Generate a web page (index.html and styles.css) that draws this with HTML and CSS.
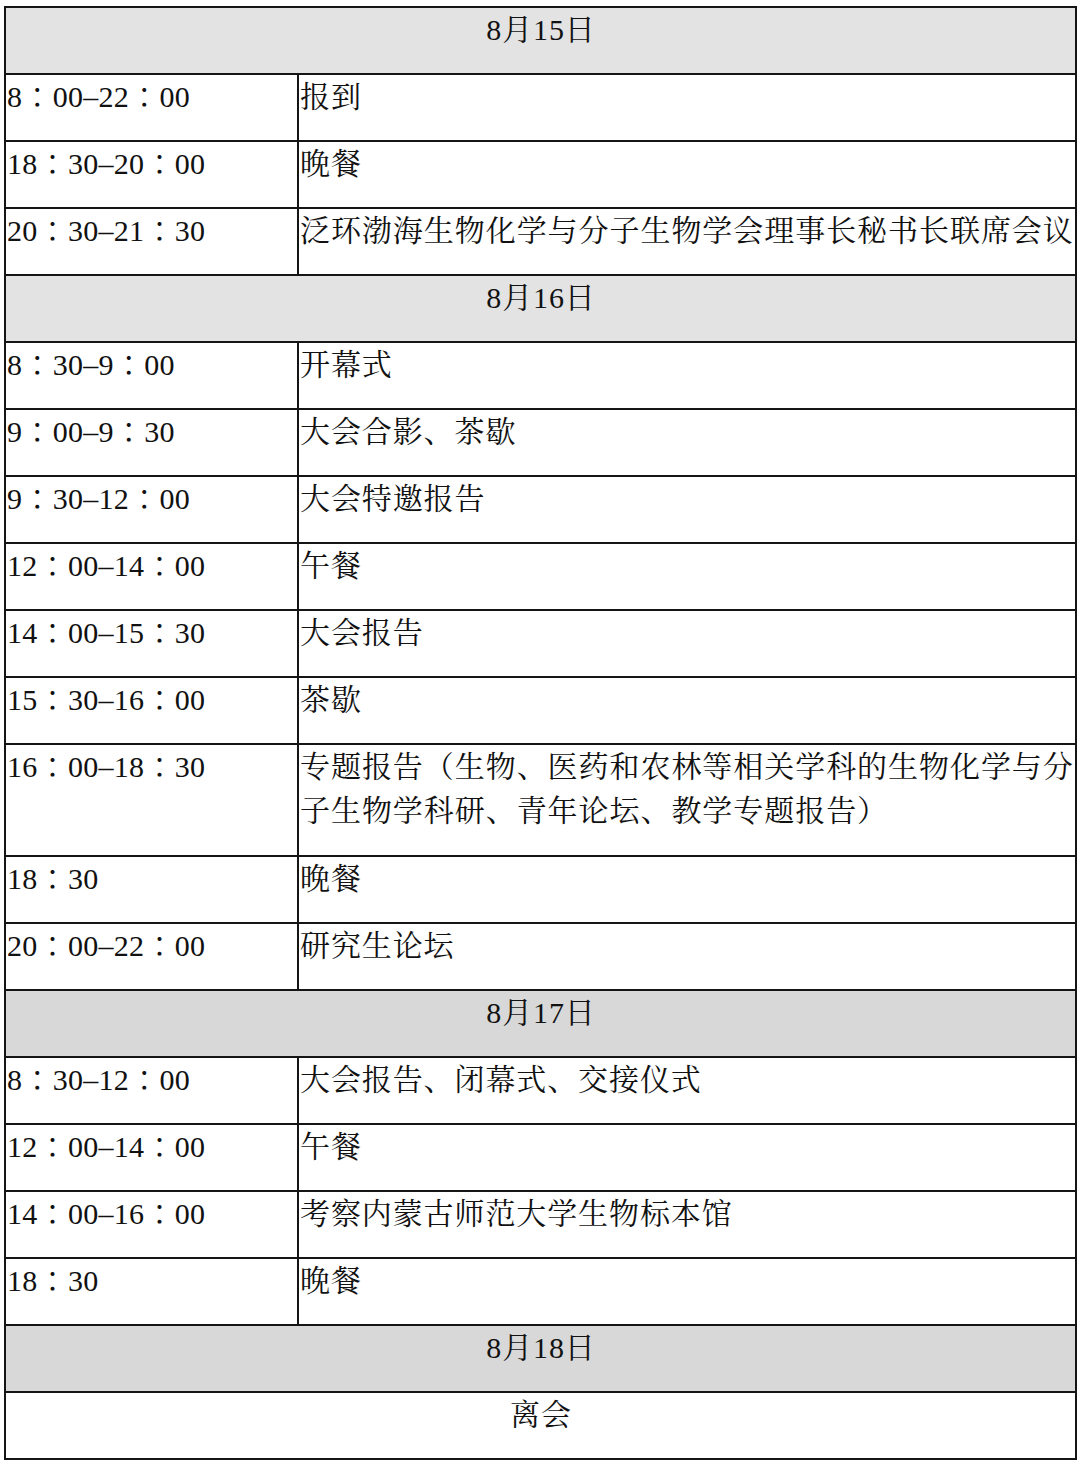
FILE: index.html
```html
<!DOCTYPE html>
<html lang="zh-CN">
<head>
<meta charset="utf-8">
<title>日程安排</title>
<link rel="stylesheet" href="styles.css">
</head>
<body>
<table class="schedule">
  <colgroup><col class="col-time"><col class="col-item"></colgroup>
  <tbody>
    <tr class="day day-light"><td colspan="2">8月15日</td></tr>
    <tr><td class="time">8<span class="colon">：</span>00–22<span class="colon">：</span>00</td><td>报到</td></tr>
    <tr><td class="time">18<span class="colon">：</span>30–20<span class="colon">：</span>00</td><td>晚餐</td></tr>
    <tr><td class="time">20<span class="colon">：</span>30–21<span class="colon">：</span>30</td><td class="tight">泛环渤海生物化学与分子生物学会理事长秘书长联席会议</td></tr>
    <tr class="day day-light"><td colspan="2">8月16日</td></tr>
    <tr><td class="time">8<span class="colon">：</span>30–9<span class="colon">：</span>00</td><td>开幕式</td></tr>
    <tr><td class="time">9<span class="colon">：</span>00–9<span class="colon">：</span>30</td><td>大会合影、茶歇</td></tr>
    <tr><td class="time">9<span class="colon">：</span>30–12<span class="colon">：</span>00</td><td>大会特邀报告</td></tr>
    <tr><td class="time">12<span class="colon">：</span>00–14<span class="colon">：</span>00</td><td>午餐</td></tr>
    <tr><td class="time">14<span class="colon">：</span>00–15<span class="colon">：</span>30</td><td>大会报告</td></tr>
    <tr><td class="time">15<span class="colon">：</span>30–16<span class="colon">：</span>00</td><td>茶歇</td></tr>
    <tr class="double"><td class="time">16<span class="colon">：</span>00–18<span class="colon">：</span>30</td><td class="tight">专题报告（生物、医药和农林等相关学科的生物化学与分子生物学科研、青年论坛、教学专题报告）</td></tr>
    <tr><td class="time">18<span class="colon">：</span>30</td><td>晚餐</td></tr>
    <tr><td class="time">20<span class="colon">：</span>00–22<span class="colon">：</span>00</td><td>研究生论坛</td></tr>
    <tr class="day day-dark"><td colspan="2">8月17日</td></tr>
    <tr><td class="time">8<span class="colon">：</span>30–12<span class="colon">：</span>00</td><td>大会报告、闭幕式、交接仪式</td></tr>
    <tr><td class="time">12<span class="colon">：</span>00–14<span class="colon">：</span>00</td><td>午餐</td></tr>
    <tr><td class="time">14<span class="colon">：</span>00–16<span class="colon">：</span>00</td><td>考察内蒙古师范大学生物标本馆</td></tr>
    <tr><td class="time">18<span class="colon">：</span>30</td><td>晚餐</td></tr>
    <tr class="day day-dark"><td colspan="2">8月18日</td></tr>
    <tr class="day"><td colspan="2">离会</td></tr>
  </tbody>
</table>
</body>
</html>
```
FILE: styles.css
```css
html, body {
  margin: 0;
  padding: 0;
  background: #ffffff;
}

body {
  padding: 6px 0 0 4px;
}

.schedule {
  border-collapse: collapse;
  table-layout: fixed;
  width: 1073px;
  font-family: "Liberation Serif", "Noto Serif CJK SC", "Noto Sans CJK SC", serif;
  font-size: 30px;
  letter-spacing: 0.9px;
  color: #111111;
}

.col-time {
  width: 293px;
}

.schedule td {
  border: 2px solid #151515;
  padding: 0 0 21px 1px;
  line-height: 44px;
  vertical-align: top;
  text-align: left;
  white-space: normal;
  word-break: break-all;
}

.schedule td.time {
  letter-spacing: 0.3px;
}

.colon {
  font-family: "Noto Serif CJK TC", "Noto Sans CJK TC", serif;
  line-height: 1;
}

.schedule td.tight {
  letter-spacing: 0.95px;
}

.schedule tr.double td {
  padding-bottom: 22px;
}

.schedule tr.day td {
  text-align: center;
}

.schedule tr.day-light td {
  background: #e3e3e3;
}

.schedule tr.day-dark td {
  background: #d8d8d8;
}
```
